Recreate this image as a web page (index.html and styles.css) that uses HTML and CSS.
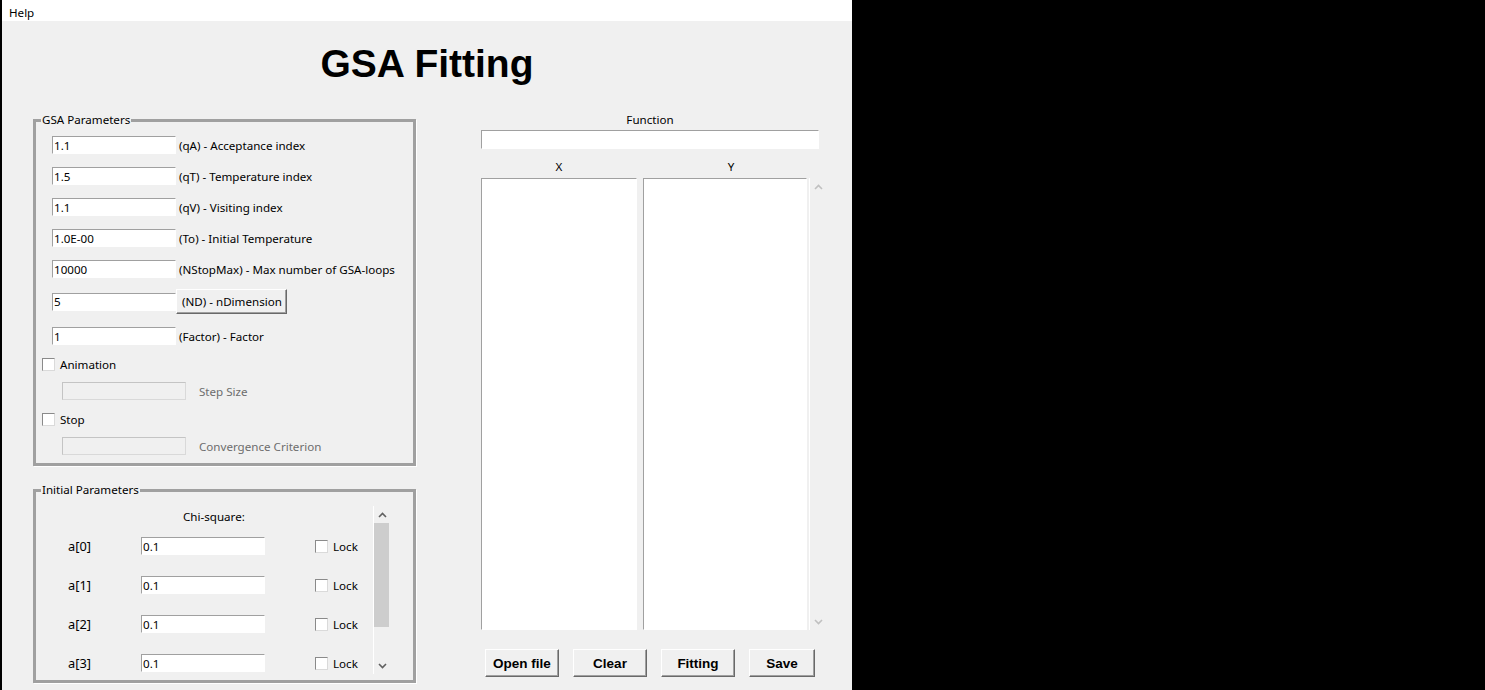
FILE: index.html
```html
<!DOCTYPE html>
<html lang="en">
<head>
<meta charset="utf-8">
<title>GSA Fitting</title>
<link rel="stylesheet" href="styles.css">
</head>
<body>
<div class="window">
  <div class="menubar"><span class="menu-item">Help</span></div>
  <h1 class="title">GSA Fitting</h1>
  <div class="main">
    <div class="left-col">
      <fieldset class="group group-gsa">
        <legend class="group-title">GSA Parameters</legend>
        <div class="param-list">
          <div class="param-row"><input class="entry" type="text" value="1.1"><span class="param-label">(qA) - Acceptance index</span></div>
          <div class="param-row"><input class="entry" type="text" value="1.5"><span class="param-label">(qT) - Temperature index</span></div>
          <div class="param-row"><input class="entry" type="text" value="1.1"><span class="param-label">(qV) - Visiting index</span></div>
          <div class="param-row"><input class="entry" type="text" value="1.0E-00"><span class="param-label">(To) - Initial Temperature</span></div>
          <div class="param-row"><input class="entry" type="text" value="10000"><span class="param-label">(NStopMax) - Max number of GSA-loops</span></div>
          <div class="param-row param-row-button"><input class="entry" type="text" value="5"><button class="btn-inline" type="button">(ND) - nDimension</button></div>
          <div class="param-row"><input class="entry" type="text" value="1"><span class="param-label">(Factor) - Factor</span></div>
          <label class="check-row"><input class="check" type="checkbox"><span>Animation</span></label>
          <div class="param-row param-row-disabled"><input class="entry" type="text" disabled><span class="param-label param-label-muted">Step Size</span></div>
          <label class="check-row check-row-stop"><input class="check" type="checkbox"><span>Stop</span></label>
          <div class="param-row param-row-disabled"><input class="entry" type="text" disabled><span class="param-label param-label-muted">Convergence Criterion</span></div>
        </div>
      </fieldset>
      <fieldset class="group group-initial">
        <legend class="group-title">Initial Parameters</legend>
        <div class="scroll-area">
          <div class="scroll-content">
            <div class="chi">Chi-square:</div>
            <div class="coef-list">
              <div class="coef-row"><span class="coef-name">a[0]</span><input class="entry" type="text" value="0.1"><label class="lock"><input class="check" type="checkbox"><span>Lock</span></label></div>
              <div class="coef-row"><span class="coef-name">a[1]</span><input class="entry" type="text" value="0.1"><label class="lock"><input class="check" type="checkbox"><span>Lock</span></label></div>
              <div class="coef-row"><span class="coef-name">a[2]</span><input class="entry" type="text" value="0.1"><label class="lock"><input class="check" type="checkbox"><span>Lock</span></label></div>
              <div class="coef-row"><span class="coef-name">a[3]</span><input class="entry" type="text" value="0.1"><label class="lock"><input class="check" type="checkbox"><span>Lock</span></label></div>
            </div>
          </div>
          <div class="vscroll">
            <div class="arrow-btn"><svg class="chev" width="9" height="6" viewBox="0 0 9 6"><polyline points="1,5 4.5,1.5 8,5" fill="none" stroke="#606060" stroke-width="1.6"/></svg></div>
            <div class="thumb"></div>
            <div class="spacer"></div>
            <div class="arrow-btn"><svg class="chev" width="9" height="6" viewBox="0 0 9 6"><polyline points="1,1 4.5,4.5 8,1" fill="none" stroke="#606060" stroke-width="1.6"/></svg></div>
          </div>
        </div>
      </fieldset>
    </div>
    <div class="right-col">
      <div class="caption">Function</div>
      <input class="entry entry-function" type="text">
      <div class="columns">
        <div class="col col-x">
          <div class="caption caption-col">X</div>
          <div class="listbox listbox-x"></div>
        </div>
        <div class="col col-y">
          <div class="caption caption-col">Y</div>
          <div class="list-wrap">
            <div class="listbox listbox-y"></div>
            <div class="vscroll vscroll-list">
              <div class="arrow-btn"><svg class="chev" width="9" height="6" viewBox="0 0 9 6"><polyline points="1,5 4.5,1.5 8,5" fill="none" stroke="#c0c0c0" stroke-width="1.6"/></svg></div>
              <div class="spacer"></div>
              <div class="arrow-btn"><svg class="chev" width="9" height="6" viewBox="0 0 9 6"><polyline points="1,1 4.5,4.5 8,1" fill="none" stroke="#c0c0c0" stroke-width="1.6"/></svg></div>
            </div>
          </div>
        </div>
      </div>
      <div class="actions">
        <button class="btn" type="button">Open file</button>
        <button class="btn" type="button">Clear</button>
        <button class="btn" type="button">Fitting</button>
        <button class="btn btn-save" type="button">Save</button>
      </div>
    </div>
  </div>
</div>
</body>
</html>
```
FILE: styles.css
```css
* { box-sizing: border-box; }

body {
  margin: 0;
  background: #000;
  font-family: "Noto Sans", "DejaVu Sans", sans-serif;
  font-size: 11.6px;
  color: #000;
}

.window {
  width: 850px;
  height: 690px;
  margin-left: 2px;
  background: #f0f0f0;
  overflow: hidden;
}

.menubar {
  height: 21px;
  background: #fff;
  padding: 4px 0 0 7px;
  line-height: 17px;
}

.title {
  margin: 20px 0 0;
  height: 46px;
  font: bold 39px/46px "Liberation Sans", Arial, sans-serif;
  text-align: center;
}

.main {
  display: flex;
  align-items: flex-start;
  margin-top: 26px;
  padding-left: 31px;
}

.left-col {
  width: 384px;
  flex-shrink: 0;
  display: flex;
  flex-direction: column;
}

.right-col {
  width: 338px;
  margin-left: 64px;
  flex-shrink: 0;
}

/* group boxes */
.group {
  width: 383px;
  min-width: 0;
  margin: 0;
  padding: 9px 0 8px 0;
  border: 3px solid #a0a0a0;
  box-shadow: 1px 1px 0 #fff;
}

.group-initial {
  margin-top: 17px;
  padding: 9px 0 6px 0;
}

.group-title {
  margin-left: 5px;
  padding: 0 1px;
  line-height: 14px;
}

.param-list {
  display: flex;
  flex-direction: column;
  gap: 13px;
  padding-left: 6px;
}

.param-row {
  display: flex;
  align-items: center;
  height: 18px;
  padding-left: 10px;
}

.param-row-button {
  height: 25px;
  margin-top: -2px;
}

.param-row-disabled {
  padding-left: 20px;
  margin-top: -2px;
}

.param-label {
  margin-left: 3px;
  white-space: nowrap;
}

.param-label-muted {
  margin-left: 13px;
  color: #6d6d6d;
}

/* inputs */
.entry {
  width: 124px;
  height: 18px;
  margin: 0;
  padding: 0 1px;
  border: 1px solid;
  border-color: #a0a0a0 #fff #fff #a0a0a0;
  background: #fff;
  font: inherit;
  color: #000;
  outline: none;
  flex-shrink: 0;
}

.entry:disabled {
  background: #f0f0f0;
  border-color: #c4c4c4 #d9d9d9 #d9d9d9 #c4c4c4;
}

.check {
  appearance: none;
  -webkit-appearance: none;
  width: 13px;
  height: 13px;
  margin: 0 5px 0 0;
  border: 1px solid;
  border-color: #8a8a8a #dadada #dadada #8a8a8a;
  background: #fff;
  flex-shrink: 0;
}

.check-row {
  display: flex;
  align-items: center;
  height: 13px;
}

.btn-inline {
  width: 111px;
  height: 25px;
  margin: 0;
  padding: 0 0 0 5px;
  text-align: left;
  font: inherit;
  color: #000;
  background: #f0f0f0;
  border: 1px solid;
  border-color: #fff #696969 #696969 #fff;
  box-shadow: inset -1px -1px 0 #a0a0a0;
  flex-shrink: 0;
}

/* initial parameters */
.scroll-area {
  display: flex;
  height: 168px;
}

.scroll-content {
  width: 337px;
  flex-shrink: 0;
  overflow: hidden;
}

.chi {
  margin-top: 4px;
  padding-left: 147px;
  line-height: 14px;
}

.coef-list {
  display: flex;
  flex-direction: column;
  gap: 21px;
  margin-top: 13px;
}

.coef-row {
  display: flex;
  align-items: center;
  height: 18px;
  padding-left: 32px;
}

.coef-name {
  width: 73px;
  font-size: 12.8px;
  flex-shrink: 0;
}

.lock {
  display: flex;
  align-items: center;
  margin-left: 50px;
}

/* scrollbars */
.vscroll {
  width: 17px;
  flex-shrink: 0;
  border-left: 1px solid #fff;
  display: flex;
  flex-direction: column;
}

.arrow-btn {
  height: 17px;
  display: flex;
  align-items: center;
  justify-content: center;
}

.chev { display: block; }

.thumb {
  height: 104px;
  margin-right: 1px;
  background: #cdcdcd;
}

.spacer { flex: 1; }

/* right side */
.caption {
  line-height: 14px;
  text-align: center;
}

.entry-function {
  display: block;
  width: 338px;
  height: 19px;
  margin-top: 3px;
}

.columns {
  display: flex;
  gap: 6px;
  margin-top: 11px;
}

.col-x { width: 156px; flex-shrink: 0; }
.col-y { width: 176px; flex-shrink: 0; }

.caption-col { margin-bottom: 4px; }

.listbox {
  height: 452px;
  background: #fff;
  border: 1px solid;
  border-color: #a0a0a0 #fff #fff #a0a0a0;
}

.list-wrap {
  display: flex;
  height: 452px;
}

.listbox-y {
  width: 164px;
  flex-shrink: 0;
}

.vscroll-list { margin-left: 2px; }

.actions {
  display: flex;
  gap: 14px;
  margin-top: 19px;
  padding-left: 4px;
}

.btn {
  width: 74px;
  height: 28px;
  margin: 0;
  padding: 0;
  font: bold 13.5px "Liberation Sans", Arial, sans-serif;
  color: #000;
  background: #f0f0f0;
  border: 1px solid;
  border-color: #fff #696969 #696969 #fff;
  box-shadow: inset -1px -1px 0 #a0a0a0;
}

.btn-save { width: 66px; }
```
